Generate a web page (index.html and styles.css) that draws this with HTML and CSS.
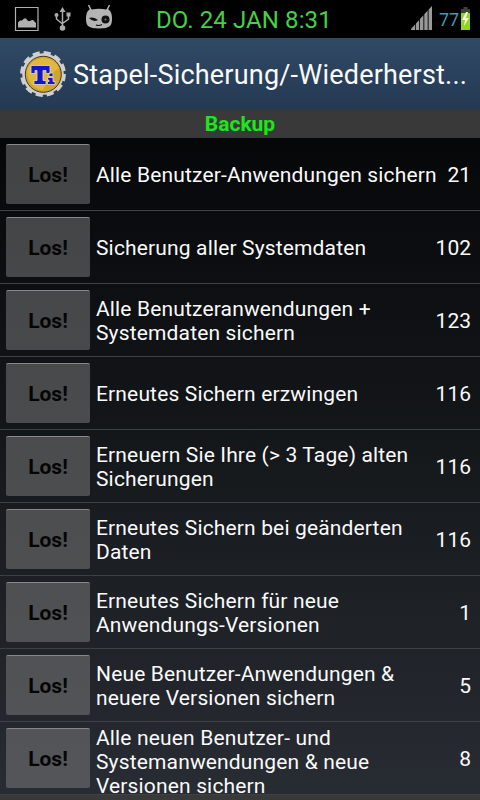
FILE: index.html
```
<!DOCTYPE html>
<html lang="de">
<head>
<meta charset="utf-8">
<title>Stapel-Sicherung</title>
<link rel="stylesheet" href="styles.css">
</head>
<body>
<div class="status">
  <div class="status-icons">
    <svg width="26" height="26" viewBox="0 0 26 26"><path d="M1.500 1.500h22.500v23h-22.500z" fill="none" stroke="#b0b0b0" stroke-width="1.200"/><path d="M4 21.500v-5l2-2h2l2-2h2l2 2.500h2l2-1h1l3 3v4.500z" fill="#b0b0b0"/></svg>
    <svg class="usb" width="18" height="26" viewBox="0 0 18 26"><path d="M8.500 3v19M2.500 9v4l6 5M14.500 8v5l-6 4.500" fill="none" stroke="#aaa" stroke-width="1.500"/><path d="M8.500 1l3 5h-6zM12.500 6.500h4v4h-4z" fill="#aaa"/><circle cx="2.500" cy="9" r="2" fill="#aaa"/><circle cx="8.500" cy="22" r="2.800" fill="#aaa"/></svg>
    <svg class="cid" width="28" height="28" viewBox="0 0 28 28"><path d="M3.500 3l3 6M24.500 3l-3 6" stroke="#b4b4b4" stroke-width="1.500"/><path d="M4 8Q5 6.500 7 7.500Q14 6 21 7.500Q23 6.500 24 8Q27 10 27 17Q27 22 25 24Q22 26.500 14 26.500Q6 26.500 3 24Q1 22 1 17Q1 10 4 8Z" fill="#b4b4b4"/><path d="M4 16q4-1.500 9 2q-5 2.500-9-2z" fill="#111"/><circle cx="20.500" cy="17.500" r="4" fill="#111"/><circle cx="20.500" cy="17.500" r="1" fill="#777"/><path d="M11 23q3 1.200 6-.5" fill="none" stroke="#111" stroke-width="1.200"/></svg>
  </div>
  <div class="clock">DO. 24 JAN 8:31</div>
  <svg class="signal" width="22" height="24" viewBox="0 0 22 24"><path d="M0 24v-1l4-4.500v5.500zM4.800 24v-6.200l3.400-3.800v10zM9 24v-11l3.400-3.800v14.800zM13.300 24v-15.800l3.400-3.800v19.600zM17.600 24v-20.500l3.400-3.500v24z" fill="#999"/></svg>
  <div class="percent">77</div>
  <svg class="battery" width="9" height="23" viewBox="0 0 9 23"><path d="M2.500 0h4v2h2.500v21h-9v-21h2.500z" fill="#3c4430"/><path d="M0 6h9v17h-9z" fill="#93d326"/><path d="M5 5l-4 8h3l-1 6 5-8h-3l2-6z" fill="#f2ffe5"/></svg>
</div>
<header class="titlebar">
  <svg width="48" height="48" viewBox="0 0 48 48">
    <circle cx="24" cy="24" r="20.800" fill="#cfcfce"/>
    <circle cx="24" cy="24" r="21.200" fill="none" stroke="#cfcfce" stroke-width="3.400" stroke-dasharray="7.100 4" stroke-linejoin="round"/>
    <circle cx="24.300" cy="24.300" r="18" fill="#d0a52b" stroke="#3f3620" stroke-width="1"/>
    <path d="M8 20Q12 9 24 8Q35 8 40 18Q32 22 24 40Q9 38 8 20" fill="#e9c64d" opacity=".6"/>
    <path d="M12 15.500h19v8h-4v-3h-3v10h3v4h-12v-4h3v-10h-2v3h-4zM30 23h4v3.500h-4zM28.500 27.500h5.500v4h2v3h-7.500v-3h1.500v-1.500h-1.500z" fill="#1018cf" stroke="#ecd9c0" stroke-width=".8"/>
  </svg>
  <h1>Stapel-Sicherung/-Wiederherst...</h1>
</header>
<h2 class="section">Backup</h2>
<main class="list">
  <div class="row"><button>Los!</button><p>Alle Benutzer-Anwendungen sichern</p><span>21</span></div>
  <div class="row"><button>Los!</button><p>Sicherung aller Systemdaten</p><span>102</span></div>
  <div class="row"><button>Los!</button><p>Alle Benutzeranwendungen +<br>Systemdaten sichern</p><span>123</span></div>
  <div class="row"><button>Los!</button><p>Erneutes Sichern erzwingen</p><span>116</span></div>
  <div class="row"><button>Los!</button><p>Erneuern Sie Ihre (&gt; 3 Tage) alten<br>Sicherungen</p><span>116</span></div>
  <div class="row"><button>Los!</button><p>Erneutes Sichern bei geänderten<br>Daten</p><span>116</span></div>
  <div class="row"><button>Los!</button><p>Erneutes Sichern für neue<br>Anwendungs-Versionen</p><span>1</span></div>
  <div class="row"><button>Los!</button><p>Neue Benutzer-Anwendungen &amp;<br>neuere Versionen sichern</p><span>5</span></div>
  <div class="row tall"><button>Los!</button><p>Alle neuen Benutzer- und<br>Systemanwendungen &amp; neue<br>Versionen sichern</p><span>8</span></div>
</main>
<div class="next-section"></div>
</body>
</html>
```
FILE: styles.css
```
* { box-sizing: border-box; }
body {
  margin: 0;
  width: 480px;
  height: 800px;
  overflow: hidden;
  display: flex;
  flex-direction: column;
  background: #000;
  color: #fafafa;
  font-family: Roboto, sans-serif;
}
svg { display: block; flex: none; }
h1, h2, p { margin: 0; font-weight: 400; }
.status {
  height: 38px;
  flex: none;
  display: flex;
  align-items: flex-start;
  background: #000;
}
.status-icons { display: flex; width: 156px; padding: 6px 0 0 14px; }
.usb { margin-left: 14px; }
.cid { margin: -4px 0 0 13px; }
.clock {
  width: 255px;
  font-size: 24px;
  line-height: 38px;
  padding-top: 1px;
  letter-spacing: .1px;
  color: #45d145;
  white-space: nowrap;
}
.signal { margin-top: 6px; }
.percent {
  width: 23px;
  margin-left: 6px;
  padding-top: 1px;
  font-size: 18px;
  line-height: 38px;
  color: #4a94b5;
}
.battery { margin-top: 7px; margin-left: -1px; }
.titlebar {
  height: 72px;
  flex: none;
  display: flex;
  align-items: center;
  padding-left: 19px;
  background: linear-gradient(#304964, #28405b 60%, #263951);
}
.titlebar h1 {
  margin-left: 6px;
  padding-top: 2px;
  font-size: 27px;
  letter-spacing: .2px;
  line-height: 34px;
  white-space: nowrap;
}
.section {
  height: 28px;
  flex: none;
  background: #393939;
  color: #1de61d;
  font-size: 21px;
  font-weight: 700;
  line-height: 28px;
  text-align: center;
}
.list {
  flex: none;
  background: linear-gradient(#060709, #14171a 45%, #282c33);
}
.row {
  height: 73px;
  display: flex;
  align-items: center;
  padding: 0 9px 0 6px;
  border-bottom: 1px solid #3e4144;
}
.row button {
  width: 84px;
  height: 60px;
  flex: none;
  padding: 1px 0 0;
  border: 0;
  border-top: 1px solid #85878a;
  border-radius: 2px;
  background: rgba(128, 128, 128, .5);
  color: #050505;
  font: 700 21px/24px Roboto, sans-serif;
}
.row p {
  flex: 1;
  margin-left: 6px;
  padding-top: 2px;
  font-size: 21px;
  letter-spacing: .15px;
  line-height: 24px;
  white-space: nowrap;
}
.row span { padding-top: 2px; font-size: 21px; line-height: 24px; }
.tall { height: 73px; }
.tall p { padding-top: 8px; }
.next-section { flex: 1; background: #393939; }
```
